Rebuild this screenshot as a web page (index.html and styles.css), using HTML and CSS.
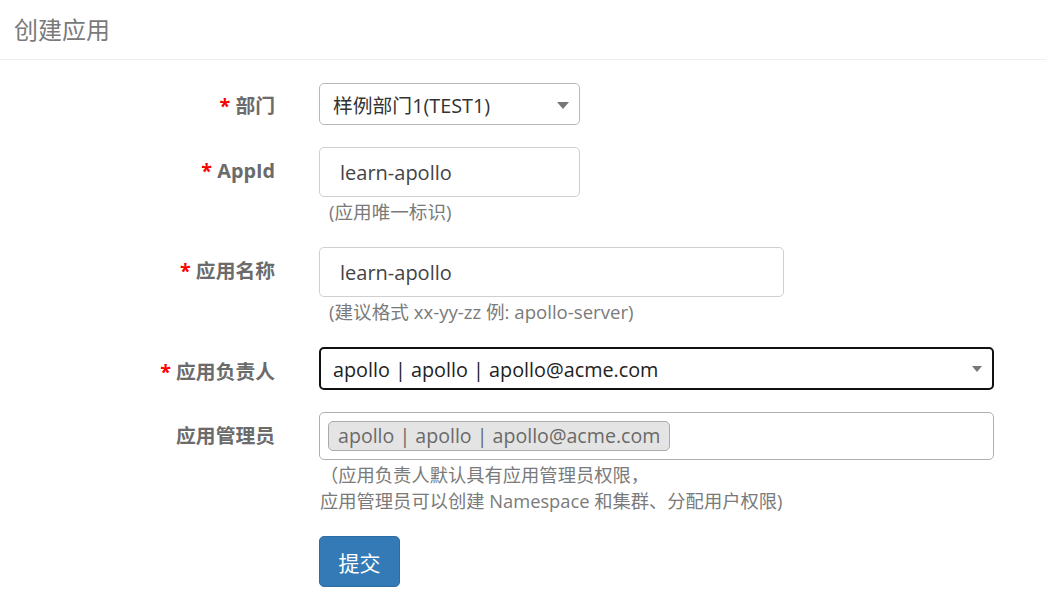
FILE: index.html
```html
<!DOCTYPE html>
<html lang="zh">
<head>
<meta charset="utf-8">
<title>创建应用</title>
<link rel="stylesheet" href="styles.css">
</head>
<body>
<div class="header"><h1 class="title">创建应用</h1></div>
<form class="form">
  <div class="group">
    <label class="label"><span class="req">*</span> 部门</label>
    <div class="control">
      <div class="select short"><span class="sel-text">样例部门1(TEST1)</span><span class="caret"></span></div>
    </div>
  </div>
  <div class="group">
    <label class="label"><span class="req">*</span> AppId</label>
    <div class="control">
      <div class="input short">learn-apollo</div>
      <div class="help">(应用唯一标识)</div>
    </div>
  </div>
  <div class="group">
    <label class="label"><span class="req">*</span> 应用名称</label>
    <div class="control">
      <div class="input medium">learn-apollo</div>
      <div class="help">(建议格式 xx-yy-zz 例: apollo-server)</div>
    </div>
  </div>
  <div class="group">
    <label class="label"><span class="req">*</span> 应用负责人</label>
    <div class="control">
      <div class="select2 focus"><span class="s2-text">apollo | apollo | apollo@acme.com</span><span class="caret small"></span></div>
    </div>
  </div>
  <div class="group">
    <label class="label">应用管理员</label>
    <div class="control">
      <div class="multi"><span class="tag">apollo | apollo | apollo@acme.com</span></div>
      <div class="help multi-help">（应用负责人默认具有应用管理员权限，<br>应用管理员可以创建 Namespace 和集群、分配用户权限)</div>
    </div>
  </div>
  <div class="group">
    <div class="label"></div>
    <div class="control"><button type="button" class="btn">提交</button></div>
  </div>
</form>
</body>
</html>
```
FILE: styles.css
```css
* { box-sizing: border-box; }
body {
  margin: 0;
  background: #fff;
  font-family: "Open Sans", "Noto Sans CJK SC", sans-serif;
  color: #333;
}
.header {
  height: 60px;
  border-bottom: 1px solid #eee;
  padding-left: 14px;
  display: flex;
  align-items: center;
}
.title {
  margin: 0;
  font-size: 24px;
  font-weight: 400;
  color: #7a7a7a;
  padding-bottom: 2px;
}
.form {
  padding-top: 23px;
}
.group {
  display: flex;
  margin-bottom: 22px;
}
.label {
  width: 275px;
  flex: none;
  text-align: right;
  font-weight: 700;
  font-size: 19.8px;
  color: #6b6b6b;
  padding-top: 11px;
  line-height: 24px;
}
.req { color: #f00; }
.control {
  margin-left: 44px;
}
.select, .input, .select2, .multi {
  border: 1px solid #b8b8b8;
  border-radius: 5px;
  background: #fff;
}
.select {
  height: 42px;
  width: 261px;
  display: flex;
  align-items: center;
  padding-left: 13px;
  font-size: 19.8px;
  color: #333;
  position: relative;
}
.caret {
  position: absolute;
  right: 10px;
  top: 18px;
  width: 0;
  height: 0;
  border-left: 6px solid transparent;
  border-right: 6px solid transparent;
  border-top: 7px solid #777;
}
.caret.small {
  border-left-width: 5px;
  border-right-width: 5px;
  border-top-width: 6px;
  top: 17px;
  right: 10px;
}
.input {
  height: 50px;
  display: flex;
  align-items: center;
  padding-left: 20px;
  font-size: 20px;
  color: #444;
  border-color: #cfcfcf;
}
.short { width: 261px; }
.medium { width: 465px; }
.help {
  margin-top: 2px;
  padding-left: 10px;
  font-size: 18.6px;
  line-height: 26px;
  color: #7a7a7a;
}
.group:nth-child(2) .label { padding-top: 12px; }
.group:nth-child(3) { margin-top: 1px; }
.group:nth-child(3) .label { padding-top: 12px; }
.select2 {
  width: 675px;
  height: 43px;
  display: flex;
  align-items: center;
  padding-left: 13px;
  font-size: 19.8px;
  color: #222;
  position: relative;
}
.select2.focus {
  border: 2px solid #111;
  padding-left: 12px;
  padding-top: 2px;
}
.group:nth-child(4) .label { padding-top: 13px; }
.group:nth-child(5) { margin-top: 1px; }
.multi {
  width: 675px;
  height: 48px;
  padding: 8px 8px;
  border-color: #b0b0b0;
}
.tag {
  display: inline-block;
  background: #e4e4e4;
  border: 1px solid #aaa;
  border-radius: 5px;
  padding: 0 9px;
  height: 30px;
  line-height: 28px;
  font-size: 19.6px;
  color: #6a6a6a;
}
.group:nth-child(5) .label { padding-top: 12px; }
.multi-help {
  padding-left: 1px;
  margin-top: 2px;
  font-size: 18.3px;
}
.btn {
  width: 81px;
  height: 51px;
  background: #337ab7;
  border: 1px solid #2e6da4;
  border-radius: 5px;
  color: #fff;
  font-family: "Open Sans", "Noto Sans CJK SC", sans-serif;
  font-size: 21px;
  padding: 0;
  cursor: pointer;
}
```
